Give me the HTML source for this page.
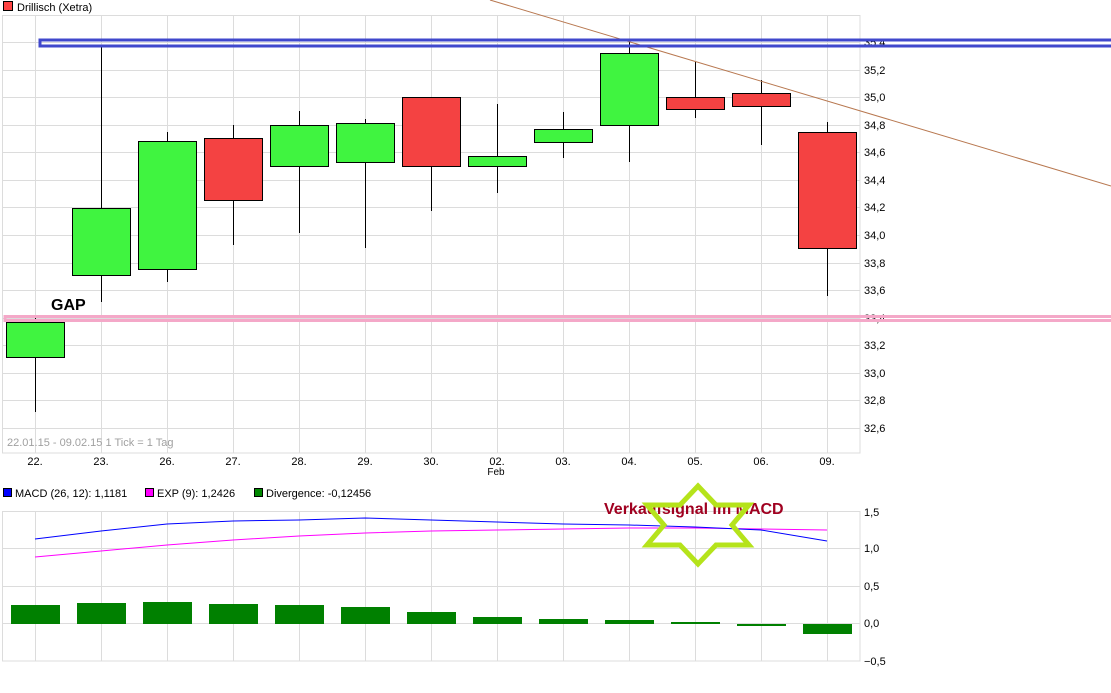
<!DOCTYPE html>
<html><head><meta charset="utf-8"><style>
html,body{margin:0;padding:0;background:#fff;width:1111px;height:693px;overflow:hidden}
svg text{font-family:"Liberation Sans",sans-serif}
</style></head><body>
<svg width="1111" height="693" xmlns="http://www.w3.org/2000/svg">
<rect x="0" y="0" width="1111" height="693" fill="#fff"/>
<!-- legend -->
<rect x="3.5" y="1.5" width="9" height="9" fill="#f44" stroke="#000"/>
<text x="17" y="11" font-size="11">Drillisch (Xetra)</text>
<!-- price grid -->
<g stroke="#dcdcdc" stroke-width="1">
<path d="M35.5 15V453M101.5 15V453M167.5 15V453M233.5 15V453M299.5 15V453M365.5 15V453M431.5 15V453M497.5 15V453M563.5 15V453M629.5 15V453M695.5 15V453M761.5 15V453M827.5 15V453"/>
<path d="M2 42.5H860M2 70.5H860M2 97.5H860M2 125.5H860M2 152.5H860M2 180.5H860M2 207.5H860M2 235.5H860M2 263.5H860M2 290.5H860M2 318.5H860M2 345.5H860M2 373.5H860M2 400.5H860M2 428.5H860"/>
<rect x="2.5" y="15.5" width="857.5" height="437.5" fill="none"/>
</g>
<!-- price axis labels -->
<g font-size="11" fill="#000">
<text x="864" y="46">35,4</text><text x="864" y="74">35,2</text><text x="864" y="101">35,0</text>
<text x="864" y="129">34,8</text><text x="864" y="156">34,6</text><text x="864" y="184">34,4</text>
<text x="864" y="211">34,2</text><text x="864" y="239">34,0</text><text x="864" y="267">33,8</text>
<text x="864" y="294">33,6</text><text x="864" y="322">33,4</text><text x="864" y="349">33,2</text>
<text x="864" y="377">33,0</text><text x="864" y="404">32,8</text><text x="864" y="432">32,6</text>
</g>
<text x="7" y="446" font-size="11" fill="#a0a0a0">22.01.15 - 09.02.15   1 Tick = 1 Tag</text>
<g font-size="11" fill="#000" text-anchor="middle">
<text x="35" y="465">22.</text><text x="101" y="465">23.</text><text x="167" y="465">26.</text>
<text x="233" y="465">27.</text><text x="299" y="465">28.</text><text x="365" y="465">29.</text>
<text x="431" y="465">30.</text><text x="497" y="465">02.</text><text x="563" y="465">03.</text>
<text x="629" y="465">04.</text><text x="695" y="465">05.</text><text x="761" y="465">06.</text>
<text x="827" y="465">09.</text><text x="496" y="475" font-size="10">Feb</text>
</g>
<!-- wicks -->
<g stroke="#000" stroke-width="1">
<path d="M35.5 318V412M101.5 47V302M167.5 132V282M233.5 125V245M299.5 111V233M365.5 119V248M431.5 97V211M497.5 104V193M563.5 112V158M629.5 40V162M695.5 62V118M761.5 80V145M827.5 122V296"/>
</g>
<!-- bodies -->
<g stroke="#000" stroke-width="1">
<rect x="6.5" y="322.5" width="58" height="35" fill="#40f440"/>
<rect x="72.5" y="208.5" width="58" height="67" fill="#40f440"/>
<rect x="138.5" y="141.5" width="58" height="128" fill="#40f440"/>
<rect x="204.5" y="138.5" width="58" height="62" fill="#f44242"/>
<rect x="270.5" y="125.5" width="58" height="41" fill="#40f440"/>
<rect x="336.5" y="123.5" width="58" height="39" fill="#40f440"/>
<rect x="402.5" y="97.5" width="58" height="69" fill="#f44242"/>
<rect x="468.5" y="156.5" width="58" height="10" fill="#40f440"/>
<rect x="534.5" y="129.5" width="58" height="13" fill="#40f440"/>
<rect x="600.5" y="53.5" width="58" height="72" fill="#40f440"/>
<rect x="666.5" y="97.5" width="58" height="12" fill="#f44242"/>
<rect x="732.5" y="93.5" width="58" height="13" fill="#f44242"/>
<rect x="798.5" y="132.5" width="58" height="116" fill="#f44242"/>
</g>
<!-- annotations -->
<line x1="490" y1="0" x2="1111" y2="186" stroke="#b87850" stroke-width="1"/>
<rect x="40" y="40" width="1075" height="6" fill="none" stroke="#4048cc" stroke-width="3"/>
<rect x="5" y="316.5" width="1110" height="4" fill="none" stroke="#f4a8c8" stroke-width="3"/>
<text x="51" y="310" font-size="16" font-weight="bold" fill="#000">GAP</text>
<!-- MACD legend -->
<rect x="3.5" y="488.5" width="8" height="8" fill="#00f" stroke="#000"/>
<text x="15" y="497" font-size="11">MACD (26, 12): 1,1181</text>
<rect x="145.5" y="488.5" width="8" height="8" fill="#f0f" stroke="#000"/>
<text x="157" y="497" font-size="11">EXP (9): 1,2426</text>
<rect x="254.5" y="488.5" width="8" height="8" fill="#080" stroke="#000"/>
<text x="266" y="497" font-size="11">Divergence: -0,12456</text>
<!-- MACD grid -->
<g stroke="#dcdcdc" stroke-width="1">
<path d="M35.5 511V661M101.5 511V661M167.5 511V661M233.5 511V661M299.5 511V661M365.5 511V661M431.5 511V661M497.5 511V661M563.5 511V661M629.5 511V661M695.5 511V661M761.5 511V661M827.5 511V661"/>
<path d="M2 548.5H860M2 586.5H860M2 623.5H860"/>
<rect x="2.5" y="511.5" width="857.5" height="149.5" fill="none"/>
</g>
<g font-size="11">
<text x="864" y="516">1,5</text><text x="864" y="552">1,0</text><text x="864" y="590">0,5</text>
<text x="864" y="627">0,0</text><text x="864" y="665">−0,5</text>
</g>
<!-- bars -->
<g fill="#008000">
<rect x="11" y="605" width="49" height="19"/><rect x="77" y="603" width="49" height="21"/>
<rect x="143" y="602" width="49" height="22"/><rect x="209" y="604" width="49" height="20"/>
<rect x="275" y="605" width="49" height="19"/><rect x="341" y="607" width="49" height="17"/>
<rect x="407" y="612" width="49" height="12"/><rect x="473" y="617" width="49" height="7"/>
<rect x="539" y="619" width="49" height="5"/><rect x="605" y="620" width="49" height="4"/>
<rect x="671" y="622" width="49" height="2"/><rect x="737" y="624" width="49" height="2"/>
<rect x="803" y="624" width="49" height="10"/>
</g>
<polyline fill="none" stroke="#f0f" stroke-width="1" points="35,557 101,551 167,545 233,540 299,536 365,533 431,531 497,530 563,529 629,528 695,528 761,529 827,530"/>
<polyline fill="none" stroke="#00f" stroke-width="1" points="35,539 101,531 167,524 233,521 299,520 365,518 431,520 497,522 563,524 629,525 695,527 761,530 827,541"/>
<text x="604" y="514" font-size="16" font-weight="bold" fill="#a00020">Verkaufsignal im MACD</text>
<polygon fill="none" stroke="#b5e31b" stroke-width="5" stroke-linejoin="miter" points="698,486 716,505 749,505 732,525 749,545 716,545 698,564 680,545 647,545 664,525 647,505 680,505"/>
</svg>
</body></html>
